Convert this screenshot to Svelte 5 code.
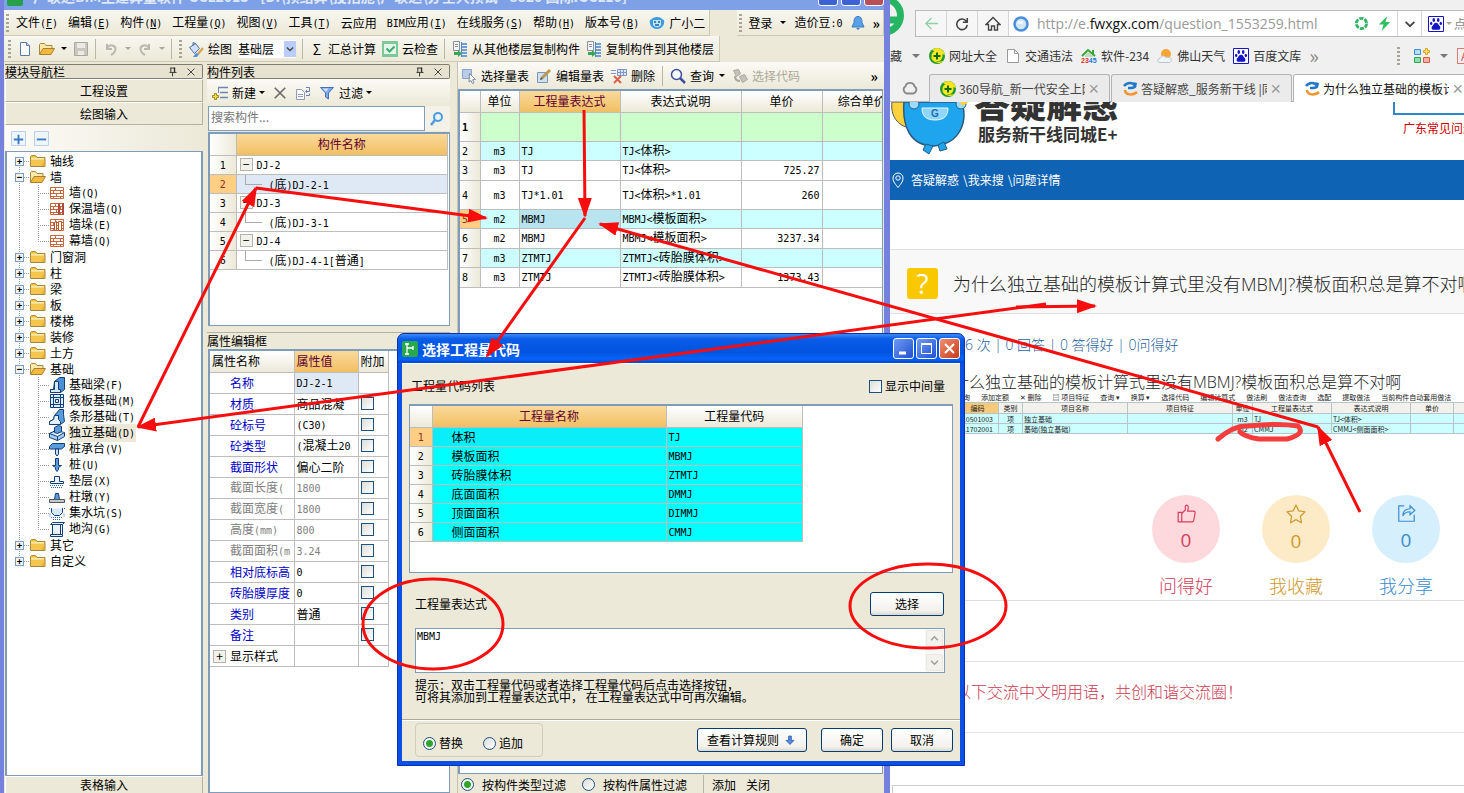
<script lang="ts">
	const menus = [
		['文件', 'F'], ['编辑', 'E'], ['构件', 'N'], ['工程量', 'Q'], ['视图', 'V'], ['工具', 'T'],
		['云应用', ''], ['BIM应用', 'I'], ['在线服务', 'S'], ['帮助', 'H'], ['版本号', 'B']
	];

	const tree = [
		{ name: '轴线' },
		{
			name: '墙',
			children: [['wall', '墙(Q)'], ['wall2', '保温墙(Q)'], ['wall3', '墙垛(E)'], ['wall', '幕墙(Q)']]
		},
		{ name: '门窗洞' },
		{ name: '柱' },
		{ name: '梁' },
		{ name: '板' },
		{ name: '楼梯' },
		{ name: '装修' },
		{ name: '土方' },
		{
			name: '基础',
			children: [
				['beam', '基础梁(F)'], ['raft', '筏板基础(M)'], ['strip', '条形基础(T)'], ['base', '独立基础(D)'],
				['cap', '桩承台(V)'], ['pile', '桩(U)'], ['cushion', '垫层(X)'], ['pier', '柱墩(Y)'],
				['pit', '集水坑(S)'], ['ditch', '地沟(G)']
			]
		},
		{ name: '其它' },
		{ name: '自定义' }
	];

	const components = [
		['DJ-2', false], ['(底)DJ-2-1', true], ['DJ-3', false], ['(底)DJ-3-1', true],
		['DJ-4', false], ['(底)DJ-4-1[普通]', true]
	] as [string, boolean][];

	// name, value, style
	const props = [
		['名称', 'DJ-2-1', 'blue'], ['材质', '商品混凝', 'blue'], ['砼标号', '(C30)', 'blue'], ['砼类型', '(混凝土20', 'blue'],
		['截面形状', '偏心二阶', 'blue'], ['截面长度(', '1800', 'gray'], ['截面宽度(', '1800', 'gray'], ['高度(mm)', '800', 'gray'],
		['截面面积(m', '3.24', 'gray'], ['相对底标高', '0', 'blue'], ['砖胎膜厚度', '0', 'blue'], ['类别', '普通', 'blue'],
		['备注', '', 'blue']
	];

	const quantities = [
		['', '', '', '', 'green'],
		['m3', 'TJ', 'TJ<体积>', '', 'cyan'],
		['m3', 'TJ', 'TJ<体积>', '725.27', ''],
		['m3', 'TJ*1.01', 'TJ<体积>*1.01', '260', 'tall'],
		['m2', 'MBMJ', 'MBMJ<模板面积>', '', 'cyan'],
		['m2', 'MBMJ', 'MBMJ<模板面积>', '3237.34', ''],
		['m3', 'ZTMTJ', 'ZTMTJ<砖胎膜体积>', '', 'cyan'],
		['m3', 'ZTMTJ', 'ZTMTJ<砖胎膜体积>', '1373.43', '']
	];

	const codes = [
		['体积', 'TJ'], ['模板面积', 'MBMJ'], ['砖胎膜体积', 'ZTMTJ'],
		['底面面积', 'DMMJ'], ['顶面面积', 'DIMMJ'], ['侧面面积', 'CMMJ']
	];

	const bookmarks = [
		['nav360', '网址大全'], ['page', '交通违法'], ['house', '软件-234'], ['weather', '佛山天气'], ['baidu', '百度文库']
	];

	const tabs = [
		['nav360', '360导航_新一代安全上网'],
		['swirl', '答疑解惑_服务新干线 |同'],
		['swirl', '为什么独立基础的模板计']
	];

	const brick = '<path fill="#fff" stroke="#c8683c" d="M1.5 2.5h13v11h-13zM1.5 5.5h13M1.5 8.5h13M1.5 11.5h13M6.5 2.5v3M11.5 5.5v3M4.5 5.5v3M7.5 8.5v3M4.5 11.5v2M11.5 11.5v2"/>';
	const paw = '<ellipse cx="5.8" cy="4" rx="1.3" ry="1.9"/><ellipse cx="10.2" cy="4" rx="1.3" ry="1.9"/><ellipse cx="3.2" cy="7.4" rx="1.2" ry="1.7"/><ellipse cx="12.8" cy="7.4" rx="1.2" ry="1.7"/><path d="M8 6.800c2 0 2.400 2 3.600 3.200 1.600 1.600.6 4-1.300 3.800-1.600-.2-3-.2-4.600 0-1.900.2-2.900-2.200-1.300-3.800C5.600 8.800 6 6.800 8 6.800z"/>';

	const icons: Record<string, string> = {
		folder: '<path fill="#f5c64e" stroke="#a8873a" d="M.5 13.500v-10l1-1h4l1.500 2h8v9z"/><path fill="#fdeeb0" d="M1 5h13v1.500H1z"/><path fill="#d9a01f" d="M11 13l4-6v6z" opacity=".5"/>',
		open: '<path fill="#fbe9a8" stroke="#a8873a" d="M.5 13V3.500l1-1h4l1.500 2h6v3"/><path fill="#f3b93a" stroke="#a8803a" d="M.5 13.500L4 7.500h11.500l-3.500 6z"/>',
		wall: brick,
		wall2: brick + '<path fill="#b04a3a" d="M9 2h2v12H9zM13 2h2v12h-2z"/>',
		wall3: brick + '<path fill="#fff" stroke="#b8562c" d="M5.500 5.500l2-1v9h-2zM9.500 4.500h3v9h-3z"/>',
		beam: '<path fill="#4b8fd4" stroke="#123f7c" d="M5.500 4.500l5-4h5v12l-4 3h-10v-3h3z"/><path fill="#d6e9fb" stroke="#123f7c" d="M5.500 4.500h4v8h2v3h-10v-3h4z"/>',
		raft: '<path fill="#dcebfa" stroke="#123f7c" d="M1.500 1.500h13v13h-13z"/><path fill="none" stroke="#123f7c" d="M4.500 1.500v13M11.500 1.500v13M1.500 4.500h13M1.500 11.500h13M6.500 6.500h3v3h-3z"/>',
		strip: '<path fill="#5a9bdc" stroke="#123f7c" d="M5.500 6.500l5-6h4v5l1 7-4 3h-11v-3l4-2z"/><path fill="#e2effc" stroke="#123f7c" d="M5.500 6.500h4v4l2 2v3h-11v-3l4-2z"/>',
		base: '<path fill="#a9cdf0" stroke="#123f7c" d="M.5 8.500l6-3 9 2v4l-7 4-8-3z"/><path fill="#e7f2fd" stroke="#123f7c" d="M.5 8.500l8 3 7-4M8.500 11.500v4"/><path fill="#5a9bdc" stroke="#123f7c" d="M5.500 2.500l4-2 3 1v5l-4 2-3-1z"/>',
		cap: '<path fill="#5a9bdc" stroke="#123f7c" d="M.5 5.500l3-3h12v3l-3 2.500H.5z"/><path fill="#cfe4f8" stroke="#123f7c" d="M6.500 8h3v5l-1.500 2-1.500-2z"/>',
		pile: '<path fill="#5a9bdc" stroke="#123f7c" d="M6.500 1.500h3v7h3l-3 2v2l-1.500 2-1.500-2v-2l-3-2h3z"/>',
		cushion: '<path fill="#e7f2fd" stroke="#123f7c" d="M5.500 3.500h5v5h4v2h-13v-2h4z"/><path stroke="#2c68ad" stroke-dasharray="1 1" d="M1 12.500h14M2 14.500h12"/>',
		pier: '<path fill="#5a9bdc" stroke="#123f7c" d="M6.500 4.500h3l1 6h-5z"/><path fill="#c5c9cd" stroke="#555" d="M.5 10.500h15v3H.5z"/>',
		pit: '<path fill="#d6e9fb" stroke="#123f7c" d="M2.500 3.500v4l3 3h5l3-3v-4"/><path stroke="#2c68ad" stroke-dasharray="1 1" d="M1 8.500v3M2 12.500h12M4 14.500h8M15 8.500v3M0 3.500h3M13 3.500h3" />',
		ditch: '<path fill="#e7f2fd" stroke="#123f7c" d="M1.500 3.500l2-2h12l-2 2zM3.500 3.500h8v10h-8zM1.500 13.500h12v2h-12zM13.500 3.500v10"/>',
		file: '<path fill="#fff" stroke="#5a7ba8" d="M3.500 1.500h6l3 3v10h-9z"/><path fill="#cfe0f5" stroke="#5a7ba8" d="M9.500 1.500v3h3"/>',
		save: '<path fill="#c9c8c0" stroke="#aaa99f" d="M1.500 1.500h13v13h-13z"/><path fill="#ecebe3" d="M4 2h8v5H4zM5 10h6v4H5z"/>',
		undo: '<path fill="none" stroke="#b9b8ae" stroke-width="2" d="M4 3v5h5M4 7c4-5 10-2 8 3-.5 1.500-2 3-4 4"/>',
		redo: '<path fill="none" stroke="#b9b8ae" stroke-width="2" d="M12 3v5H7M12 7C8 2 2 5 4 10c.5 1.500 2 3 4 4"/>',
		paint: '<path fill="#cfe0f8" stroke="#4a6ea8" d="M1.500 6.500l6-4 4 5-5 5z"/><path fill="none" stroke="#4a6ea8" d="M5 5V1.500l3 1.500"/><path stroke="#d8a040" stroke-width="2" d="M15 7l-5 6"/><path fill="#5a8ed8" d="M8 12l3 1-2 3H5z"/>',
		check: '<path fill="#7cc89a" d="M0 0h16v16H0z"/><path fill="#e4f6ea" d="M2 3h12v10H2z"/><path fill="none" stroke="#3fae6c" stroke-width="2" d="M4.500 7.500l3 3 5-5"/>',
		copyf: '<path fill="#f4f4f4" stroke="#8a8f9c" d="M1.500 .5h6v9h-6zM3 3.500h3M3 5.500h3"/><path stroke="#6f9fd4" stroke-width="2" d="M10 3h5M10 6h5M10 9h5M10 12h5M10 15h5"/><path stroke="#4f86c6" d="M9.500 1v15"/><path fill="#3aa655" d="M2 11h4V9l4 3.500L6 16v-2H2z"/>',
		robot: '<path fill="#3d9be0" d="M1 5c2 0 2-3 7-3s5 3 7 3c1 3-1 9-7 9S0 8 1 5z"/><path fill="#bfe4fb" d="M4 5h8v5c-2 3-6 3-8 0z"/><path stroke="#1a5fa0" stroke-width="1.500" d="M6 6v2M10 6v2M6 10h4"/>',
		bell: '<path fill="#5aa0e6" stroke="#3a7cc0" d="M8 1.500c4 0 4 4 4 6l2 4.500H2l2-4.500c0-2 0-6 4-6z"/><path fill="#3a7cc0" d="M6 13h4l-2 2z"/>',
		pin: '<path fill="none" stroke="#222" d="M5.500 3v5M10 3v5M5 3.500h5M4 8.500h8M7.500 9v4"/><path stroke="#222" d="M9.500 3v5"/>',
		close: '<path stroke="#333" d="M4 4l8 8M12 4l-8 8"/>',
		expand: '<path fill="#eef5fd" stroke="#b7cbe4" d="M.5 .5h15v15H.5z"/><path stroke="#3b7cc0" stroke-width="2" d="M3 9h10M8 4v10"/>',
		collapse: '<path fill="#eef5fd" stroke="#b7cbe4" d="M.5 .5h15v15H.5z"/><path stroke="#3b7cc0" stroke-width="2" d="M3 9h10"/>',
		add: '<path stroke="#6b87b8" stroke-width="1.500" d="M6 2.500h10M8 7.500h8M8 12.500h8"/><path stroke="#6b87b8" d="M6.500 2v6"/><path fill="#f8dc50" stroke="#a58a1c" d="M2.500 8.500h2v2h2v2h-2v2h-2v-2h-2v-2h2z"/>',
		del: '<path stroke="#6d6d6d" stroke-width="2" d="M2 2l12 12M14 2L2 14"/>',
		dup: '<path fill="#fff" stroke="#8d9cb8" d="M1.500 4.500h5l3 3v7h-8zM3 9.500h5M3 11.500h5"/><path fill="none" stroke="#6d7fb0" d="M11 2.500h3.500v4H11M11 10.500h3.500v-2M12 5l-1.500 1.500L12 8"/>',
		filter: '<path fill="#7ea9ea" stroke="#4870b8" d="M1.500 2.500h13l-5 5.500v6l-3-2V8z"/><path fill="#cfe0fa" d="M3.500 3.500h6L7 7z"/>',
		search: '<path fill="#e7f4ff" stroke="#4a9be0" stroke-width="2" d="M13 6a4 4 0 1 1-8 0 4 4 0 0 1 8 0z"/><path stroke="#4a9be0" stroke-width="2.500" d="M6 9l-4 5"/>',
		pick: '<path fill="#b8cbe8" stroke="#8ba4cc" d="M1.500 1.500h9v9h-9z"/><path fill="#fff" stroke="#7d8ba5" d="M8.500 5.500l6 6-3 .3 1.500 3-1.500.7-1.500-3-2 1.500z"/>',
		edit: '<path fill="#cfe0f2" stroke="#7d97b8" d="M1.500 4.500h10v10h-10z"/><path stroke="#b89a50" stroke-width="3" d="M14 2L6 10"/><path fill="#444" d="M4 12l1-3 2 2z"/>',
		remove: '<path fill="#dfe8f6" stroke="#7d97c8" d="M6.500 1.500h9v6h-9zM6.500 4.500h9M9.500 1.500v6M12.500 1.500v6M0 2.500h5M0 5.500h5"/><path stroke="#e06050" stroke-width="2" d="M3 8l7 7M10 8l-7 7"/>',
		find: '<circle cx="6.500" cy="6.500" r="5" fill="#f4f8ff" stroke="#3f4f9c" stroke-width="1.500"/><path stroke="#3f4f9c" stroke-width="2.500" d="M10 10l5 5"/>',
		code: '<path fill="#c4c3ba" stroke="#a9a89e" d="M1.500 2.500l5-1 2 4-4 3zM7.500 8.500l5-2 3 5-5 3z"/><path stroke="#a9a89e" stroke-width="2" d="M3 8c0 4 2 5 5 5"/>',
		down: '<path fill="#5b8be0" stroke="#2f5fb8" d="M6.500 3.500h3v5h3L8 13 3.500 8.500h3z"/>',
		dlg: '<rect width="16" height="16" rx="2" fill="#27a84c"/><path fill="none" stroke="#fff" stroke-width="1.300" d="M5 2v12M5 7h6M11 5v4M3 3h4M3 13h4"/>',
		back: '<path fill="none" stroke="#8fd0a8" stroke-width="1.500" d="M15 8H2M8 2L2 8l6 6"/>',
		reload: '<path fill="none" stroke="#444" stroke-width="1.800" d="M13 5a6 6 0 1 0 1 4M14 1v5H9"/>',
		home: '<path fill="none" stroke="#444" stroke-width="1.400" d="M1 8.500L8 1.500l7 7h-2.500V14H9.500v-4h-3v4h-3V8.500z"/>',
		globe: '<circle cx="8" cy="8" r="6.500" fill="#cfe6fb" stroke="#4a8ed8" stroke-width="2.500"/><path fill="#fff" d="M5 5h5v3H5z" opacity=".7"/>',
		aperture: '<circle cx="8" cy="8" r="5.500" fill="none" stroke="#32b564" stroke-width="3" stroke-dasharray="4.500 1.200"/>',
		bolt: '<path fill="#2fbf5f" d="M11 0L2 9h5l-2 7 9-9.500H9z"/>',
		chevron: '<path fill="none" stroke="#444" stroke-width="2" d="M3 5.500l5 5 5-5"/>',
		baidu: '<path fill="#fff" stroke="#1414c8" d="M.5 .5h15v15H.5z"/><g fill="#1414c8">' + paw + '</g>',
		nav360: '<circle cx="8" cy="8" r="8" fill="#1f9a2c"/><path fill="#f5e21c" d="M8 0a8 8 0 0 1 8 7L9 5 3 2A8 8 0 0 1 8 0zM2 9l6 5 7-1a8 8 0 0 1-13-4z"/><circle cx="8" cy="8" r="5.500" fill="#f8e820"/><path stroke="#0d6a18" stroke-width="2" d="M8 4.500v7M4.500 8h7"/>',
		page: '<path fill="#fff" stroke="#999" d="M2.500 1.500h7l4 4v9h-11zM9.500 1.500v4h4"/>',
		house: '<path fill="none" stroke="#3aa63a" stroke-width="2" d="M1 8l6-6 7 6M12 2v4"/><path stroke="#8bc98b" d="M5 6h5M4 8h8"/><text x="0" y="15" font-size="7" font-weight="bold" font-family="Liberation Sans" fill="#e03020">23<tspan fill="#2080d0">45</tspan></text>',
		weather: '<circle cx="9" cy="6" r="5" fill="#f9a53a"/><path fill="#f0f4f8" stroke="#b9c4d0" d="M3 14.500c-3 0-3-4 0-4 0-3 5-3 6-1 4-1 6 1 5 3.500-.3 1-1 1.500-2 1.500z"/>',
		apps: '<path fill="#b9dcf8" stroke="#3c8fd0" d="M.5 1.500h6v5h-6z"/><path fill="#8fe0a8" stroke="#2ca653" d="M.5 9.500h6v5h-6z"/><path fill="#f8b0a0" stroke="#d85a40" d="M9.500 9.500h6v5h-6z"/><path fill="#ffe36a" stroke="#e0a020" d="M11.500 .5h2v2h2v2h-2v2h-2v-2h-2v-2h2z"/>',
		cloud: '<path fill="none" stroke="#888" stroke-width="1.800" d="M4.500 13.500a4 4 0 0 1-1-7.200c1-4.500 8-4.500 9 0a4 4 0 0 1-1 7.200z"/>',
		swirl: '<path fill="none" stroke="#1f78c8" stroke-width="2.500" d="M2 5c3-4 9-4 11 0 0 2-3 2-7 2"/><path fill="#1f78c8" d="M11 1l4 1-1 5z"/><path fill="none" stroke="#f2952c" stroke-width="2.500" d="M3 9c0 5 8 6 12 2"/>',
		place: '<path fill="none" stroke="#fff" d="M8 15.500C4 10.500 3 9 3 6a5 5 0 0 1 10 0c0 3-1 4.500-5 9.500z"/><circle cx="8" cy="6" r="2.200" fill="none" stroke="#fff"/>',
		thumb: '<path fill="none" stroke="currentColor" d="M1 7h3v8H1zM4 8l3-3V2c1-2 2.500-1 2.500 1L9 6h5c1 0 1.500 1 1.200 2L14 14c-.2.700-.7 1-1.300 1H4"/>',
		star: '<path fill="none" stroke="currentColor" stroke-linejoin="round" d="M8 .8l2.200 4.700 5 .7-3.700 3.600.9 5.200L8 12.500 3.600 15l.9-5.200L.8 6.200l5-.7z"/>',
		share: '<path fill="none" stroke="currentColor" d="M6 1.500H1.500v13h13V9M5 10c0-4 2-6 6-6V1.500l4 4-4 3.500V6.500c-3 0-5 1-6 3.500z"/>'
	};

	// split a label into latin and chinese runs, latin is set in the half-width face
	function runs(s: string) {
		return s.split(/([\x20-\x7e]+)/).filter(Boolean).map((text) => ({ text, en: /^[\x20-\x7e]/.test(text) }));
	}

	let formula = $state('MBMJ');
	let mode = $state('replace');
	let filterBy = $state('type');
</script>

{#snippet t(s: string)}{#each runs(s) as r}{#if r.en}<span class="en">{r.text}</span>{:else}{r.text}{/if}{/each}{/snippet}

{#snippet icon(name: string, size = 16)}
	<svg class="icon" width={size} height={size} viewBox="0 0 16 16" fill="none" aria-hidden="true">{@html icons[name]}</svg>
{/snippet}

{#snippet panelTitle(name: string)}
	<header class="panel-title">
		<span>{name}</span>
		<button aria-label="固定">{@render icon('pin', 14)}</button>
		<button aria-label="关闭">{@render icon('close', 14)}</button>
	</header>
{/snippet}

<div class="screen">
	<!-- Estimating software -->
	<section class="app">
		<div class="app-title">
			<span class="app-logo"></span>
			<span class="app-name">广联达BIM土建算量软件 GCL2013 - [D:\预结算\投招施\广联达\办全人预试 - 8820 国际.GCL10]</span>
			<span class="cap"></span><span class="cap"></span><span class="cap red"></span>
		</div>

		<div class="bars">
			<nav class="bar menu">
				<i class="grip"></i>
				{#each menus as [label, key]}
					<button>{@render t(label)}{#if key}<span class="en">(<u>{key}</u>)</span>{/if}</button>
				{/each}
				<button class="with-icon">{@render icon('robot')}广小二</button>
			</nav>
			<div class="bar account">
				<i class="grip"></i>
				<button>登录</button><i class="caret"></i>
				<span>{@render t('造价豆:0')}</span>
				{@render icon('bell')}
				<b class="more">»</b>
			</div>
		</div>

		<div class="bars">
			<div class="bar tools">
				<i class="grip"></i>
				{@render icon('file')}
				{@render icon('open')}<i class="caret"></i>
				{@render icon('save')}
				<i class="sep"></i>
				{@render icon('undo')}<i class="caret off"></i>
				{@render icon('redo')}<i class="caret off"></i>
				<i class="sep"></i>
				<i class="grip"></i>
				<button class="with-icon">{@render icon('paint')}绘图</button>
				<span class="combo">
					<select aria-label="楼层"><option>基础层</option></select>
					<i class="combo-arrow">{@render icon('chevron', 10)}</i>
				</span>
				<i class="sep"></i>
				<button class="with-icon"><span class="sigma">Σ</span>汇总计算</button>
				<button class="with-icon">{@render icon('check')}云检查</button>
				<i class="sep"></i>
				<button class="with-icon">{@render icon('copyf')}从其他楼层复制构件</button>
				<button class="with-icon">{@render icon('copyf')}复制构件到其他楼层</button>
			</div>
		</div>

		<div class="panels">
			<aside class="nav">
				{@render panelTitle('模块导航栏')}
				<button class="nav-btn">工程设置</button>
				<button class="nav-btn">绘图输入</button>
				<div class="nav-tools">{@render icon('expand', 15)}{@render icon('collapse', 15)}</div>
				<div class="tree-box">
					<ul class="tree">
						{#each tree as node}
							<li>
								<div class="node">
									<i class="toggle">{node.children ? '−' : '+'}</i><i class="dots"></i>
									{@render icon(node.children ? 'open' : 'folder')}
									<span>{node.name}</span>
								</div>
								{#if node.children}
									<ul class="leaves">
										{#each node.children as [ico, name]}
											<li class="node" class:current={ico === 'base'}>
												<i class="dots long"></i>{@render icon(ico)}<span>{@render t(name)}</span>
											</li>
										{/each}
									</ul>
								{/if}
							</li>
						{/each}
					</ul>
				</div>
				<button class="nav-btn last">表格输入</button>
			</aside>

			<section class="middle">
				{@render panelTitle('构件列表')}
				<div class="list-tools">
					<button class="with-icon">{@render icon('add')}新建</button><i class="caret"></i>
					{@render icon('del', 14)}
					{@render icon('dup')}
					<button class="with-icon">{@render icon('filter')}过滤</button><i class="caret"></i>
				</div>
				<div class="search">
					<input type="text" placeholder="搜索构件..." aria-label="搜索构件" />
					<button aria-label="搜索">{@render icon('search')}</button>
				</div>
				<div class="box comp-box">
					<table class="grid comps">
						<thead>
							<tr><th class="num"></th><th class="hot">构件名称</th></tr>
						</thead>
						<tbody>
							{#each components as [name, child], i}
								<tr class:sel={i === 1}>
									<th class="num">{@render t(String(i + 1))}</th>
									<td>
										<div class="comp" class:child>
											{#if child}<i class="elbow"></i>{:else}<i class="minus">−</i>{/if}
											<span>{@render t(name)}</span>
										</div>
									</td>
								</tr>
							{/each}
						</tbody>
					</table>
				</div>

				<header class="prop-title">属性编辑框</header>
				<div class="box prop-box">
					<table class="grid props">
						<thead>
							<tr><th>属性名称</th><th class="hot">属性值</th><th>附加</th></tr>
						</thead>
						<tbody>
							{#each props as [name, value, kind], i}
								<tr class={kind}>
									<td class="name">{@render t(name)}</td>
									<td class="value" class:picked={i === 0}>{@render t(value)}</td>
									<td class="tick">{#if i > 0}<input type="checkbox" aria-label={name} />{/if}</td>
								</tr>
							{/each}
							<tr>
								<td class="group"><i class="plus">+</i>显示样式</td><td></td><td></td>
							</tr>
						</tbody>
					</table>
				</div>
			</section>

			<section class="right">
				<div class="qty-tools">
					<button class="with-icon">{@render icon('pick')}选择量表</button>
					<button class="with-icon">{@render icon('edit')}编辑量表</button>
					<button class="with-icon">{@render icon('remove')}删除</button>
					<i class="sep"></i>
					<button class="with-icon">{@render icon('find')}查询</button><i class="caret"></i>
					<button class="with-icon" disabled>{@render icon('code')}选择代码</button>
					<b class="more">»</b>
				</div>
				<div class="box qty-box">
					<table class="grid qty">
						<colgroup><col class="c0" /><col class="c1" /><col class="c2" /><col class="c3" /><col class="c4" /><col class="c5" /></colgroup>
						<thead>
							<tr><th></th><th>单位</th><th class="hot">工程量表达式</th><th>表达式说明</th><th>单价</th><th>综合单价</th></tr>
						</thead>
						<tbody>
							{#each quantities as [unit, expr, desc, price, kind], i}
								<tr class={kind} class:sel={i === 4}>
									<th class="num">{@render t(String(i + 1))}</th>
									<td class="unit">{@render t(unit)}</td>
									<td class:picked={i === 4}>{@render t(expr)}</td>
									<td>{@render t(desc)}</td>
									<td class="price">{@render t(price)}</td>
									<td></td>
								</tr>
							{/each}
						</tbody>
					</table>
				</div>
				<div class="qty-foot">
					<label><input type="radio" value="type" bind:group={filterBy} />按构件类型过滤</label>
					<label><input type="radio" value="prop" bind:group={filterBy} />按构件属性过滤</label>
					<i class="sep"></i>
					<button>添加</button>
					<button>关闭</button>
				</div>
			</section>
		</div>
	</section>

	<!-- Browser -->
	<section class="browser">
		<div class="address">
			<svg class="e-logo" width="17" height="38" viewBox="0 0 17 38" aria-hidden="true">
				<path fill="none" stroke="#26b562" stroke-width="7" d="M-6 -1a15 15 0 1 1 0 33M-4 20h14" />
			</svg>
			<div class="address-box">
				<button class="cell" aria-label="后退">{@render icon('back', 15)}</button>
				<button class="cell" aria-label="刷新">{@render icon('reload', 14)}</button>
				<button class="cell" aria-label="主页">{@render icon('home')}</button>
				<div class="url">
					{@render icon('globe')}
					<a href="http://e.fwxgx.com/question_1553259.html">http://e.<b>fwxgx.com</b>/question_1553259.html</a>
					{@render icon('aperture', 15)}
					{@render icon('bolt', 15)}
				</div>
				<button class="cell small" aria-label="展开">{@render icon('chevron', 14)}</button>
				<span class="engine">{@render icon('baidu')}<i class="caret off"></i>点</span>
			</div>
		</div>

		<div class="marks">
			<span>藏</span><i class="caret dim"></i>
			{#each bookmarks as [ico, name]}
				<a href="#{ico}">{@render icon(ico)}{name}</a>
			{/each}
			<span class="chev">»</span>
			<i class="grip end"></i>
			{@render icon('apps')}<i class="caret dim"></i>
			<span class="abox">A</span>
		</div>

		<div class="tabs">
			<span class="tab-cloud">{@render icon('cloud')}</span>
			{#each tabs as [ico, name], i}
				<div class="tab" class:active={i === 2}>
					{@render icon(ico)}<span>{name}</span><button aria-label="关闭标签">×</button>
				</div>
			{/each}
		</div>

		<div class="page">
			<div class="brand">
				<svg width="84" height="56" viewBox="0 0 84 56" aria-hidden="true">
					<path fill="#ffd23c" stroke="#4a5560" d="M2 0h18v26C8 24 0 14 2 0z" />
					<path fill="#1fa5ee" stroke="#2a5a80" stroke-width="1.500" d="M14 0h58c6 20-2 42-28 44-24 0-32-20-30-44z" />
					<path fill="#1fa5ee" stroke="#2a5a80" d="M36 42l-3 6 6 4 4-8zM48 43l2 6 7-2-3-7z" />
					<circle cx="24" cy="2" r="5" fill="#9adcff" stroke="#2a5a80" /><circle cx="71" cy="2" r="5" fill="#9adcff" stroke="#2a5a80" />
					<path fill="#8ed6fa" stroke="#e8f7ff" d="M32 6h26c0 8-4 12-13 12S32 14 32 6z" />
					<path fill="#ffd23c" d="M70 0h9l-7 4z" />
					<text x="41" y="15" font-size="10" font-weight="bold" font-family="Liberation Sans" fill="#1c6cae">G</text>
				</svg>
				<div class="brand-text">
					<strong>答疑解惑</strong>
					<span>服务新干线同城E+</span>
				</div>
				<div class="side">
					<i class="side-box"></i>
					<a href="#gd">广东常见问题</a>
				</div>
			</div>

			<div class="crumbs">
				{@render icon('place')}<a href="#qa">答疑解惑</a> <a href="#s">\我来搜</a> <a href="#d">\问题详情</a>
			</div>

			<div class="question">
				<span class="qmark">?</span>
				<h1>为什么独立基础的模板计算式里没有MBMJ?模板面积总是算不对啊</h1>
			</div>

			<p class="stats">6 次 | 0 回答 | 0 答得好 | 0问得好</p>
			<p class="ask">为什么独立基础的模板计算式里没有MBMJ?模板面积总是算不对啊</p>

			<div class="shot">
				<div class="shot-tools">
					<span>查询</span><span>添加定额</span><span>✕ 删除</span><span>▤ 项目特征</span><span>查询 ▾</span><span>换算 ▾</span><span>选择代码</span><span>编辑计算式</span><span>做法刷</span><span>做法查询</span><span>选配</span><span>提取做法</span><span>当前构件自动套用做法</span>
				</div>
				<table>
					<colgroup><col class="s0" /><col class="s1" /><col class="s2" /><col class="s2" /><col class="s3" /><col class="s4" /><col class="s4" /><col class="s5" /><col class="s6" /></colgroup>
					<thead>
						<tr><th class="hot">编码</th><th>类别</th><th>项目名称</th><th>项目特征</th><th>单位</th><th>工程量表达式</th><th>表达式说明</th><th>单价</th><th>综</th></tr>
					</thead>
					<tbody>
						<tr><td>010501003</td><td class="mid">项</td><td>独立基础</td><td></td><td class="mid">m3</td><td>TJ</td><td>TJ&lt;体积&gt;</td><td></td><td></td></tr>
						<tr><td>011702001</td><td class="mid">项</td><td>基础(独立基础)</td><td></td><td class="mid">m2</td><td>CMMJ</td><td>CMMJ&lt;侧面面积&gt;</td><td></td><td></td></tr>
					</tbody>
				</table>
			</div>

			<div class="acts">
				<button class="act pink"><span class="disc">{@render icon('thumb', 19)}<em>0</em></span>问得好</button>
				<button class="act gold"><span class="disc">{@render icon('star', 20)}<em>0</em></span>我收藏</button>
				<button class="act sky"><span class="disc">{@render icon('share', 19)}<em>0</em></span>我分享</button>
			</div>
			<div class="blank"></div>
			<p class="notice">以下交流中文明用语，共创和谐交流圈！</p>
			<div class="reply"></div>
		</div>
	</section>

	<!-- Code picker -->
	<div class="dialog" role="dialog" aria-label="选择工程量代码">
		<header>
			{@render icon('dlg')}
			<h2>选择工程量代码</h2>
			<button aria-label="最小化"><svg width="19" height="19"><path stroke="#fff" stroke-width="3" d="M5 14h7" /></svg></button>
			<button aria-label="最大化"><svg width="19" height="19"><path fill="none" stroke="#fff" d="M4.500 5h10v9.500h-10z" /><path stroke="#fff" stroke-width="2" d="M4 5h11" /></svg></button>
			<button class="x" aria-label="关闭"><svg width="19" height="19"><path stroke="#fff" stroke-width="2" d="M5 5l9 9M14 5l-9 9" /></svg></button>
		</header>
		<div class="dialog-body">
			<div class="line">
				<span>工程量代码列表</span>
				<label><input type="checkbox" />显示中间量</label>
			</div>
			<div class="box code-box">
				<table class="grid codes">
					<colgroup><col class="k0" /><col class="k1" /><col class="k2" /></colgroup>
					<thead>
						<tr><th></th><th class="hot">工程量名称</th><th>工程量代码</th></tr>
					</thead>
					<tbody>
						{#each codes as [name, code], i}
							<tr class:sel={i === 0}>
								<th class="num">{@render t(String(i + 1))}</th>
								<td class="label" class:first={i === 0}>{name}</td>
								<td>{@render t(code)}</td>
							</tr>
						{/each}
					</tbody>
				</table>
			</div>
			<div class="line expr">
				<label for="formula">工程量表达式</label>
				<button class="xp wide">选择</button>
			</div>
			<div class="memo">
				<textarea id="formula" bind:value={formula}></textarea>
				<div class="scroll">
					<i>{@render icon('chevron', 11)}</i>
					<i>{@render icon('chevron', 11)}</i>
				</div>
			</div>
			<p class="hint">提示：双击工程量代码或者选择工程量代码后点击选择按钮，<br />可将其添加到工程量表达式中， 在工程量表达式中可再次编辑。</p>
		</div>
		<footer>
			<fieldset>
				<label><input type="radio" value="replace" bind:group={mode} />替换</label>
				<label><input type="radio" value="append" bind:group={mode} />追加</label>
			</fieldset>
			<button class="xp rules">查看计算规则 {@render icon('down', 14)}</button>
			<button class="xp ok">确定</button>
			<button class="xp">取消</button>
		</footer>
	</div>

	<!-- Red pen marks -->
	<svg class="marks-layer" width="1464" height="793" viewBox="0 0 1464 793" aria-hidden="true">
		<defs>
			<marker id="head" markerUnits="userSpaceOnUse" markerWidth="20" markerHeight="14" refX="18" refY="7" orient="auto-start-reverse">
				<path d="M0 0l20 7-20 7z" fill="#f60d0d" />
			</marker>
		</defs>
		<path class="scrawl" d="M1218 439q16-14 30-13 30-3 50 0 8 8-11 13h-28q-14-2-19-7" />
		<g class="pen">
			<path d="M584 110l1 106" marker-end="url(#head)" />
			<path d="M585 218L487 356" marker-end="url(#head)" />
			<path d="M138 427L256 188" marker-end="url(#head)" />
			<path d="M256 188L486 218" marker-end="url(#head)" />
			<path d="M138 427L1046 304" marker-start="url(#head)" />
			<path d="M1016 307L1095 306" marker-end="url(#head)" />
			<path d="M1318 427L600 224" marker-end="url(#head)" />
			<path d="M1360 512L1318 427" marker-end="url(#head)" />
			<ellipse cx="433" cy="624" rx="70" ry="45" />
			<ellipse cx="928" cy="606" rx="78" ry="42" />
		</g>
	</svg>
</div>

<style>
	:global(body) {
		margin: 0;
		overflow: hidden;
	}

	.screen {
		position: relative;
		display: grid;
		grid-template-columns: minmax(0, 890fr) minmax(0, 574fr);
		height: 100vh;
		overflow: hidden;
		font: 12px/16px 'Noto Sans CJK SC', sans-serif;
		color: #000;
		background: #fff;
	}

	.screen * { box-sizing: border-box; }

	button {
		margin: 0;
		padding: 0;
		border: 0;
		background: none;
		font: inherit;
		color: inherit;
		white-space: nowrap;
	}

	button:disabled { color: #aca899; }
	i, em { font-style: normal; }
	a { color: inherit; text-decoration: none; }
	p, h1, h2, ul { margin: 0; padding: 0; }
	ul { list-style: none; }
	.icon { flex: none; display: block; }
	.en { font: 10px/16px 'DejaVu Sans Mono', monospace; }

	.caret {
		flex: none;
		width: 0;
		height: 0;
		border: 3px solid transparent;
		border-top-color: #000;
		border-bottom: 0;
	}
	.caret.off { border-top-color: #aca899; }
	.caret.dim { border-width: 4px 4px 0; border-top-color: #777; }

	.sep { flex: none; width: 1px; height: 20px; background: #b9b6a4; }
	.grip {
		flex: none;
		width: 3px;
		height: 18px;
		background: repeating-linear-gradient(#a8a593 0 2px, transparent 2px 4px);
	}
	.more { font-size: 14px; }
	.with-icon { display: flex; align-items: center; gap: 4px; }

	/* App frame */
	.app {
		display: flex;
		flex-direction: column;
		min-width: 0;
		height: 100vh;
		border: solid #7482dd;
		border-width: 0 6px 0 4px;
		background: #ece9d8;
		overflow: hidden;
	}

	.app-title {
		display: flex;
		flex: none;
		height: 10px;
		padding-bottom: 4px;
		align-items: flex-end;
		overflow: hidden;
		background: #7ea0e6;
		color: #dfe8fb;
	}
	.app-logo { width: 16px; height: 8px; margin: 0 10px 0 3px; border-radius: 2px; background: #27a04c; }
	.app-name { flex: 1; overflow: hidden; font-weight: bold; font-size: 14px; line-height: 20px; white-space: nowrap; }
	.cap { width: 20px; height: 18px; margin-left: 3px; border: 1px solid #fff; border-radius: 3px; background: #3c62d6; }
	.cap.red { background: #b85058; }

	.bars { display: flex; flex: none; justify-content: space-between; height: 26px; }
	.bar {
		display: flex;
		align-items: center;
		padding: 0 4px 0 2px;
		border-right: 1px solid #cbc8b4;
		border-bottom: 1px solid #cbc8b4;
		background: linear-gradient(#f8f7f0, #ece9d8);
	}
	.menu { gap: 10px; }
	.menu .grip { margin-right: -3px; }
	.account { gap: 7px; padding-right: 3px; }
	.account .caret { margin-right: 2px; }
	.tools { gap: 6px; padding: 0 5px 0 4px; }
	.tools .sep { margin-right: 1px; }
	.sigma { width: 14px; font-size: 14px; }

	.combo { display: flex; align-items: center; width: 58px; height: 18px; background: #fff; }
	.combo select {
		flex: 1;
		min-width: 0;
		padding: 0;
		border: 0;
		background: none;
		appearance: none;
		font: inherit;
	}
	.combo-arrow { display: flex; padding: 3px 1px; background: #b9cdf8; }

	.panels {
		display: grid;
		grid-template-columns: 199px 247px minmax(0, 1fr);
		flex: 1;
		min-height: 0;
	}

	.panel-title {
		display: flex;
		flex: none;
		align-items: center;
		height: 15px;
		margin-top: 2px;
		border: 1px solid #807d70;
		border-radius: 0 2px 2px 0;
		border-left: 0;
		background: #e6e2cf;
	}
	.panel-title span { flex: 1; }
	.panel-title button { margin-right: 4px; }

	/* Module navigation */
	.nav { display: flex; flex-direction: column; min-height: 0; padding-left: 1px; }
	.nav-btn {
		flex: none;
		height: 23px;
		border: 1px solid #b5b29f;
		border-color: #fff #b5b29f #b5b29f #fff;
		background: #ece9d8;
	}
	.nav-btn.last { height: 17px; border-bottom: 0; }
	.nav-tools {
		display: flex;
		flex: none;
		align-items: center;
		gap: 8px;
		height: 26px;
		padding-left: 6px;
		background: linear-gradient(90deg, #fcfbf8, #ece9d8);
	}
	.tree-box {
		flex: 1;
		min-height: 0;
		padding: 1px 0 0 8px;
		border: 1px solid #7f9db9;
		border-width: 1px 2px;
		background: #fff;
		overflow: hidden;
	}
	.tree {
		background: repeating-linear-gradient(#999 0 1px, transparent 1px 2px) 4px 8px / 1px calc(100% - 16px) no-repeat;
	}
	.node { display: flex; align-items: center; height: 16px; white-space: nowrap; }
	.toggle {
		display: flex;
		align-items: center;
		justify-content: center;
		width: 9px;
		height: 9px;
		border: 1px solid #7b9ebd;
		background: #f4f3ee;
		font: bold 9px/7px 'DejaVu Sans Mono', monospace;
	}
	.dots { width: 6px; height: 1px; background: repeating-linear-gradient(90deg, #999 0 1px, transparent 1px 2px); }
	.dots.long { width: 11px; }
	.node span { padding: 0 4px; }
	.node .en { padding: 0; }
	.leaves {
		margin-left: 23px;
		background: repeating-linear-gradient(#999 0 1px, transparent 1px 2px) 0 0 / 1px calc(100% - 8px) no-repeat;
	}
	.current > span { margin-left: 3px; padding: 0 1px; background: #ece9d8; }

	/* Grids */
	.box { border: 1px solid #7f9db9; border-width: 2px 1px 1px 2px; background: #fff; overflow: hidden; }
	.grid { border-collapse: collapse; table-layout: fixed; }
	.grid th, .grid td {
		height: 19px;
		padding: 0 2px;
		border: solid #bdbdbd;
		border-width: 0 1px 1px 0;
		overflow: hidden;
		font-weight: normal;
		line-height: 16px;
		text-align: left;
		white-space: nowrap;
	}
	.grid thead th { height: 21px; text-align: center; background: linear-gradient(#fff, #ece9d8); }
	.grid thead th.hot { color: #600030; background: linear-gradient(#fbd99b, #f0bf62); }
	.grid .num { text-align: center; background: linear-gradient(90deg, #fff, #ece9d8); }
	.grid .sel .num { color: #903020; background: #ffce85; }

	/* Component list */
	.middle { display: flex; flex-direction: column; min-height: 0; margin-left: 4px; }
	.list-tools {
		display: flex;
		flex: none;
		align-items: center;
		gap: 8px;
		height: 27px;
		padding-left: 5px;
		background: linear-gradient(#fbfaf5, #ece9d8);
	}
	.list-tools .caret { margin-left: -5px; }
	.search { display: flex; flex: none; height: 25px; }
	.search input {
		flex: 1;
		min-width: 0;
		margin-left: 1px;
		padding: 0 2px 4px;
		border: 1px solid #7f9db9;
		font: inherit;
	}
	.search input::placeholder { color: #777; }
	.search button { width: 25px; padding-left: 4px; background: #f4f2e8; }
	.comp-box { flex: none; height: 194px; margin: 1px 0 0 1px; }
	.comps { width: calc(100% - 1px); }
	.comps th.num { width: 26px; }
	.comps .sel td { background: #dfe9f5; }
	.grid.comps td { padding: 0 3px; }
	.comp { display: flex; align-items: center; gap: 4px; height: 18px; }
	.comp.child { gap: 7px; align-items: flex-start; padding-left: 5px; }
	.comp.child span { line-height: 18px; }
	.elbow { width: 17px; height: 10px; border: solid #aaa; border-width: 0 0 1px 1px; }
	.minus, .plus {
		width: 13px;
		height: 13px;
		border: 1px solid #b4b4ac;
		background: #f2f1ea;
		line-height: 10px;
		text-align: center;
	}

	/* Properties */
	.prop-title { flex: none; height: 17px; margin-top: 6px; border-top: 1px solid #b5b29f; line-height: 16px; }
	.prop-box { flex: 1; min-height: 0; margin-left: 1px; }
	.props { width: 179px; }
	.grid.props td { height: 21px; }
	.props th:first-child { width: 84px; }
	.props th:nth-child(2) { width: 64px; }
	.grid.props th { text-align: left; }
	.grid.props .name { padding-left: 20px; }
	.props .blue .name { color: #0000c8; }
	.props .gray { color: #808080; }
	.props .picked { background: #dfe9f5; }
	.grid.props .group { padding-left: 3px; }
	.plus { display: inline-block; margin-right: 4px; }

	input[type='checkbox'] {
		display: block;
		flex: none;
		width: 13px;
		height: 13px;
		margin: 0;
		border: 1px solid #1c5180;
		appearance: none;
		background: linear-gradient(135deg, #dcdcd7, #fff);
	}
	input[type='radio'] {
		flex: none;
		width: 13px;
		height: 13px;
		margin: 0;
		border: 1px solid #1c5180;
		border-radius: 50%;
		appearance: none;
		background: linear-gradient(135deg, #dcdcd7, #fff);
	}
	input[type='radio']:checked { background: radial-gradient(circle, #2fa52f 0 3px, #f4f4f0 4px); }

	/* Quantities */
	.right {
		display: flex;
		flex-direction: column;
		min-width: 0;
		min-height: 0;
		margin-left: 7px;
		border-left: 1px solid #c6c3b0;
	}
	.qty-tools {
		display: flex;
		flex: none;
		align-items: center;
		gap: 7px;
		height: 27px;
		padding: 0 6px 0 3px;
		background: linear-gradient(#fbfaf5, #ece9d8);
	}
	.qty-tools .caret { margin-left: -2px; }
	.qty-tools .more { margin-left: auto; }
	.qty-box { flex: 1; min-height: 0; margin-right: 1px; }
	.qty { width: 442px; }
	.c0 { width: 20px; }
	.c1 { width: 39px; }
	.c2 { width: 101px; }
	.c3 { width: 121px; }
	.c4 { width: 81px; }
	.qty .unit { text-align: center; }
	.qty .price { text-align: right; }
	.grid.qty .num { text-align: left; }
	.grid.qty td, .grid.qty tbody th { height: 20px; }
	.grid.qty .cyan td, .grid.qty .cyan th { height: 19px; }
	.grid.qty .tall td, .grid.qty .green td { height: 29px; }
	.cyan td { background: #ccffff; }
	.green td { background: #ccffcc; }
	.green .en { font-weight: bold; }
	.qty .cyan td.picked { background: #b8e4f0; }
	.qty-foot { display: flex; flex: none; align-items: center; gap: 16px; height: 19px; padding: 2px 0 0 3px; }
	.qty-foot label, .line label, fieldset label { display: flex; align-items: center; }
	.qty-foot label { gap: 8px; }
	.qty-foot button + button { margin-left: -6px; }
	.qty-foot .sep { margin-right: -8px; }

	/* Browser chrome */
	.browser {
		display: flex;
		flex-direction: column;
		min-width: 0;
		height: 100vh;
		background: #f0f0f0;
		overflow: hidden;
	}
	.address { display: flex; flex: none; height: 38px; }
	.e-logo { flex: none; margin-right: 8px; }
	.address-box {
		display: flex;
		flex: 1;
		align-items: stretch;
		min-width: 0;
		height: 27px;
		margin-top: 10px;
		border: 1px solid #bbb;
		border-right: 0;
		background: #fff;
		overflow: hidden;
	}
	.cell {
		display: flex;
		flex: none;
		align-items: center;
		justify-content: center;
		width: 31px;
		border-right: 1px solid #d4d4d4;
		background: #f6f6f6;
	}
	.cell.small { width: 25px; border-left: 1px solid #d4d4d4; background: #fff; }
	.url { display: flex; flex: 1; align-items: center; gap: 8px; min-width: 0; padding: 0 5px 0 4px; color: #999; }
	.url a { flex: 1; overflow: hidden; font: 14px/20px 'Open Sans', sans-serif; white-space: nowrap; }
	.url b { color: #111; font-weight: normal; }
	.engine { display: flex; flex: none; align-items: center; gap: 2px; width: 42px; padding-left: 6px; color: #888; overflow: hidden; white-space: nowrap; }

	.marks { display: flex; flex: none; align-items: center; height: 36px; color: #333; white-space: nowrap; overflow: hidden; }
	.marks .caret { margin: 0 9px 0 10px; }
	.marks a { display: flex; align-items: center; gap: 4px; margin-right: 8px; }
	.chev { font-size: 20px; color: #888; }
	.grip.end { margin: 0 14px 0 auto; }
	.abox { flex: none; width: 16px; border: 1px solid #e07878; color: #e05050; line-height: 14px; padding-left: 3px; margin-right: -9px; }

	.tabs { display: flex; flex: none; height: 28px; border-bottom: 1px solid #b4b4b4; }
	.tab-cloud { flex: none; padding: 6px 10px 0 12px; }
	.tab {
		display: flex;
		flex: 0 0 181px;
		align-items: center;
		gap: 3px;
		min-width: 0;
		height: 28px;
		margin-left: 1px;
		padding: 0 10px;
		border: 1px solid #b4b4b4;
		border-bottom: 0;
		border-radius: 3px 3px 0 0;
		background: #ebebeb;
		color: #444;
	}
	.tab span { flex: 1; min-width: 0; overflow: hidden; white-space: nowrap; }
	.tab button { color: #999; font: 18px/16px 'Liberation Sans', sans-serif; }
	.tab.active { background: #fff; color: #111; }

	/* Question page */
	.page { flex: 1; min-height: 0; background: #fff; overflow: hidden; }
	.brand { display: flex; height: 58px; overflow: hidden; }
	.brand svg { flex: none; }
	.brand-text { display: flex; flex-direction: column; color: #333; white-space: nowrap; }
	.brand-text strong { height: 20px; font-size: 36px; line-height: 1px; font-weight: 900; overflow: hidden; }
	.brand-text span { padding-left: 4px; font-size: 17px; line-height: 24px; font-weight: bold; }
	.side { flex: 0 0 71px; margin-left: auto; white-space: nowrap; overflow: hidden; color: #c00; }
	.side-box { display: block; height: 13px; border: solid #2f86c8; border-width: 0 0 2px 2px; }
	.side a { display: block; padding: 5px 0 0 10px; }

	.crumbs { display: flex; align-items: center; gap: 4px; height: 40px; background: #0f63b4; color: #fff; }
	.crumbs .icon { margin-right: 1px; }

	.question {
		display: flex;
		align-items: center;
		gap: 15px;
		height: 65px;
		margin-top: 49px;
		padding: 4px 0 0 17px;
		border: solid #e0e0e0;
		border-width: 1px 0;
		background: #f8f8f8;
		overflow: hidden;
	}
	.qmark {
		flex: none;
		width: 31px;
		height: 31px;
		border-radius: 3px;
		background: #fac800;
		color: #fff;
		font: 28px/31px 'Open Sans', sans-serif;
		text-align: center;
	}
	h1, .stats, .ask, .notice { font-family: 'Open Sans', 'Noto Sans CJK SC', sans-serif; font-weight: 300; white-space: nowrap; }
	h1 { color: #222; font-size: 18px; line-height: 24px; }
	.stats { padding: 20px 0 0 75px; font-size: 14px; line-height: 22px; color: #1e5f9e; }
	.ask { padding: 14px 0 0 47px; font-size: 16px; line-height: 24px; color: #222; }

	.shot { height: 40px; padding-left: 66px; overflow: hidden; font-size: 7px; line-height: 8px; color: #222; }
	.shot-tools { display: flex; gap: 11px; height: 8px; overflow: hidden; white-space: nowrap; line-height: 6px; }
	.shot table { width: 542px; border-collapse: collapse; table-layout: fixed; }
	.shot th, .shot td { height: 10px; padding: 0 1px; border: 1px solid #b8c4cc; font-weight: normal; white-space: nowrap; overflow: hidden; }
	.shot td { background: #ccffff; }
	.shot td.mid { text-align: center; }
	.shot th { height: 11px; background: #f2f1ec; }
	.shot th.hot { background: #f6c97b; }
	.s0 { width: 42px; }
	.s1 { width: 24px; }
	.s2 { width: 105px; }
	.s3 { width: 20px; }
	.s4 { width: 79px; }
	.s5 { width: 43px; }

	.acts { display: flex; justify-content: flex-end; gap: 42px; height: 167px; padding: 61px 24px 0 0; border-bottom: 1px solid #ddd; }
	.act { display: flex; flex-direction: column; align-items: center; gap: 10px; width: 68px; font-size: 18px; line-height: 24px; font-weight: 300; }
	.disc { display: flex; flex: none; flex-direction: column; align-items: center; width: 68px; height: 68px; padding-top: 9px; border-radius: 50%; }
	.disc em { font: 19px/34px 'Open Sans', sans-serif; }
	.pink { color: #d4405c; }
	.gold { color: #d09a30; }
	.sky { color: #3c8cd0; }
	.pink .disc { background: #fdd9de; }
	.gold .disc { background: #fdebc8; }
	.sky .disc { background: #d5effd; }
	.blank { height: 61px; border-bottom: 1px solid #e2e2e2; }
	.notice { height: 71px; padding-left: 65px; border-bottom: 1px solid #e2e2e2; font-size: 16px; line-height: 60px; color: #cc3a50; }
	.reply { height: 40px; margin: 52px 0 0 2px; border: solid #ccc; border-width: 1px 0 0 1px; }

	/* Dialog */
	.dialog {
		position: absolute;
		top: 333px;
		left: 397px;
		width: 568px;
		padding: 0 4px 4px;
		border: 1px solid #0a2fb0;
		border-radius: 7px 7px 0 0;
		background: #0a50e6;
	}
	.dialog header {
		display: flex;
		align-items: center;
		gap: 2px;
		height: 29px;
		margin: 0 -4px;
		padding: 0 4px;
		border-radius: 6px 6px 0 0;
		background: linear-gradient(#3c8cf8, #0a5be8 5px, #0354e0 18px, #0663fa 25px, #0445c8);
	}
	.dialog h2 { flex: 1; padding-left: 2px; color: #fff; font-size: 14px; line-height: 20px; }
	.dialog header button { width: 21px; height: 21px; border: 1px solid #fff; border-radius: 3px; background: linear-gradient(135deg, #6f9bf5, #2050d0); }
	.dialog header button.x { background: linear-gradient(135deg, #f09070, #c83a18); }
	.dialog header svg { display: block; }
	.dialog-body { padding: 0 7px; background: #ece9d8; border-top: 1px solid #fff; }
	.line { display: flex; align-items: center; justify-content: space-between; padding: 14px 8px 10px 2px; }
	.line label { gap: 3px; }
	.code-box { height: 169px; border-left-width: 1px; }
	.codes { width: 393px; }
	.k0 { width: 22px; }
	.k1 { width: 234px; }
	.codes td { background: #00ffff; }
	.codes td.first { background: #0aeefa; }
	.grid.codes .label { padding-left: 19px; }
	.line.expr { padding: 19px 9px 12px 6px; }

	.xp {
		display: flex;
		align-items: center;
		justify-content: center;
		gap: 4px;
		width: 62px;
		height: 24px;
		border: 1px solid #003c74;
		border-radius: 3px;
		background: linear-gradient(#fff, #f2f1ec 80%, #dcd8cc);
	}
	.xp.wide { width: 74px; }
	.xp.rules { width: 110px; margin-left: auto; }
	.xp.ok { margin: 0 8px 0 14px; }

	.memo { display: flex; height: 45px; margin: 0 8px 0 6px; border: 1px solid #7f9db9; background: #fff; }
	.memo textarea {
		flex: 1;
		padding: 0 1px;
		border: 0;
		outline: 0;
		resize: none;
		font: 10px/16px 'DejaVu Sans Mono', monospace;
	}
	.scroll { display: flex; flex-direction: column; justify-content: space-between; padding: 1px; color: #ccc; background: #f8f8f6; }
	.scroll i { padding: 2px; border: 1px solid #dcdad0; border-radius: 2px; background: #efede4; opacity: 0.5; }
	.scroll i:first-child .icon { transform: rotate(180deg); }
	.hint { padding: 6px 6px 16px; line-height: 12px; }
	.dialog footer {
		display: flex;
		align-items: center;
		padding: 3px 7px 4px 13px;
		border-top: 1px solid #aca899;
		box-shadow: inset 0 1px #fff;
		background: #ece9d8;
	}
	fieldset {
		display: flex;
		align-items: center;
		gap: 20px;
		width: 128px;
		height: 34px;
		margin: 0;
		padding: 6px 0 0 7px;
		border: 1px solid #d0cdbb;
		border-radius: 4px;
	}
	fieldset label { gap: 3px; }

	/* Pen marks */
	.marks-layer { position: absolute; top: 0; left: 0; pointer-events: none; }
	.pen { fill: none; stroke: #f60d0d; stroke-width: 3; }
	.scrawl { fill: none; stroke: #f63c3c; stroke-width: 5; stroke-linecap: round; }
</style>
